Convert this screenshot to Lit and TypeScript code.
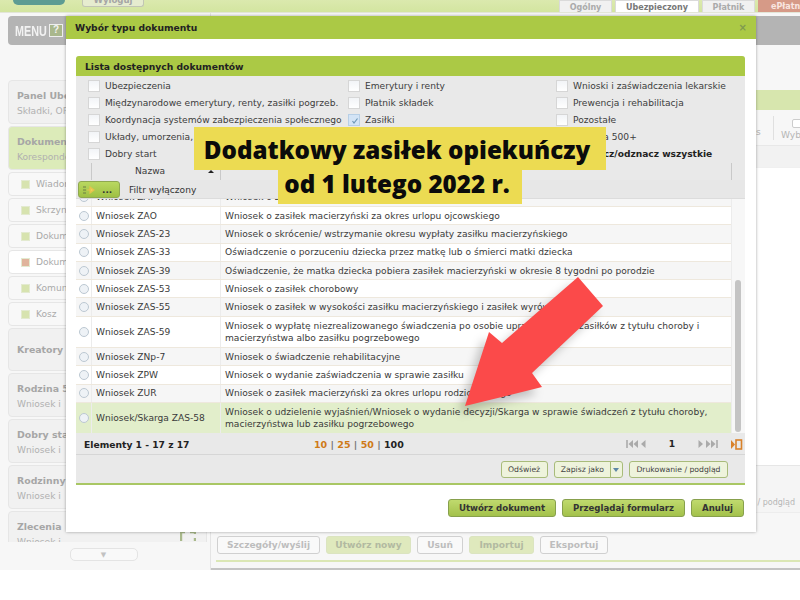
import { LitElement, html, css, svg } from "lit";
import { customElement } from "lit/decorators.js";

const SIDE = [
  { k: "big", t: "Panel Ubezpieczonego", s: "Składki, OFE" },
  { k: "big green", t: "Dokumenty", s: "Korespondencja" },
  { k: "sub", t: "Wiadomości" },
  { k: "sub", t: "Skrzynka" },
  { k: "sub", t: "Dokumenty robocze" },
  { k: "sub on", t: "Dokumenty wysłane" },
  { k: "sub", t: "Komunikaty" },
  { k: "sub", t: "Kosz" },
  { k: "big solo", t: "Kreatory" },
  { k: "big", t: "Rodzina 500+", s: "Wniosek i" },
  { k: "big", t: "Dobry start", s: "Wniosek i" },
  { k: "big", t: "Rodzinny kapitał", s: "Wniosek i" },
];

const COL1 = ["Ubezpieczenia", "Międzynarodowe emerytury, renty, zasiłki pogrzeb.", "Koordynacja systemów zabezpieczenia społecznego", "Układy, umorzenia, ulgi", "Dobry start"];
const COL2 = ["Emerytury i renty", "Płatnik składek", "Zasiłki"];
const COL3 = ["Wnioski i zaświadczenia lekarskie", "Prewencja i rehabilitacja", "Pozostałe", "Rodzina 500+"];

const ROWS: [string, string[], string][] = [
  ["Wniosek ZAY", ["Wniosek o zasiłek"], "a clip"],
  ["Wniosek ZAO", ["Wniosek o zasiłek macierzyński za okres urlopu ojcowskiego"], ""],
  ["Wniosek ZAS-23", ["Wniosek o skrócenie/ wstrzymanie okresu wypłaty zasiłku macierzyńskiego"], "a"],
  ["Wniosek ZAS-33", ["Oświadczenie o porzuceniu dziecka przez matkę lub o śmierci matki dziecka"], ""],
  ["Wniosek ZAS-39", ["Oświadczenie, że matka dziecka pobiera zasiłek macierzyński w okresie 8 tygodni po porodzie"], "a"],
  ["Wniosek ZAS-53", ["Wniosek o zasiłek chorobowy"], ""],
  ["Wniosek ZAS-55", ["Wniosek o zasiłek w wysokości zasiłku macierzyńskiego i zasiłek wyrównawczy"], "a"],
  ["Wniosek ZAS-59", ["Wniosek o wypłatę niezrealizowanego świadczenia po osobie uprawnionej do zasiłków z tytułu choroby i", "macierzyństwa albo zasiłku pogrzebowego"], "two"],
  ["Wniosek ZNp-7", ["Wniosek o świadczenie rehabilitacyjne"], "a"],
  ["Wniosek ZPW", ["Wniosek o wydanie zaświadczenia w sprawie zasiłku"], ""],
  ["Wniosek ZUR", ["Wniosek o zasiłek macierzyński za okres urlopu rodzicielskiego"], "a"],
  ["Wniosek/Skarga ZAS-58", ["Wniosek o udzielenie wyjaśnień/Wniosek o wydanie decyzji/Skarga w sprawie świadczeń z tytułu choroby,", "macierzyństwa lub zasiłku pogrzebowego"], "two sel"],
];

@customElement("app-root")
export class AppRoot extends LitElement {
  static styles = css`
    :host { display: block; width: 800px; height: 600px; position: relative; overflow: hidden; background: #fff; font-family: "DejaVu Sans", Verdana, sans-serif; font-size: 9.1px; color: #333; }
    * { box-sizing: border-box; }
    .app { height: 570px; background: #f7f7f7; display: flex; flex-direction: column; }
    .top { height: 13px; flex: none; display: flex; background: linear-gradient(#dbe9ae, #d3e5a0); border-bottom: 1px solid #e3e6d8; overflow: hidden; }
    .logo { width: 52px; height: 5px; margin-left: 13px; background: #5d9c93; border-radius: 0 0 8px 8px; }
    .logout { margin-left: 17px; width: 62px; height: 7px; border: 1px solid #c2c6b4; border-top: 0; border-radius: 0 0 3px 3px; background: #e6eccf; color: #a5a5a5; font-weight: 700; font-size: 8.6px; line-height: 1px; text-align: center; }
    .tabs { margin-left: auto; display: flex; gap: 3px; }
    .tab { width: 53px; height: 14px; background: #f1f1f1; border: 1px solid #dadada; border-bottom: 0; color: #aaa; font-weight: 700; font-size: 8px; line-height: 13px; text-align: center; }
    .tab.cur { width: 84px; background: #fff; color: #777; }
    .tab.pay { width: 42px; background: #d69a87; border: 0; color: #f9e6e0; white-space: nowrap; overflow: hidden; text-align: left; padding-left: 13px; }
    .body { flex: 1; display: flex; min-height: 0; }
    .side { width: 211px; flex: none; padding: 3px 3px 0 8px; display: flex; flex-direction: column; border-right: 1px solid #e4e4e4; }
    .menu { height: 29px; flex: none; background: #b4b4b4; border-radius: 4px; color: #f2f2f2; font-family: "Liberation Sans", sans-serif; font-weight: 700; font-size: 15px; display: flex; align-items: center; padding-left: 7px; gap: 7px; }
    .menu span { display: block; width: 27px; transform: scaleX(.72); transform-origin: left; }
    .menu i { width: 14px; height: 13px; border: 1.5px solid #eee; background: #a9b78c; font-style: normal; font-size: 10px; line-height: 10px; text-align: center; }
    .list { height: 462px; margin-top: 35px; overflow: hidden; display: flex; flex-direction: column; gap: 2px; flex: none; }
    .card { flex: none; border: 1px solid #e6e6e6; border-radius: 4px; background: #f1f1f1; color: #aaa; padding: 0 8px; white-space: nowrap; overflow: hidden; }
    .big { height: 44px; padding-top: 8px; }
    .big b { display: block; font-size: 9.4px; line-height: 14px; color: #a6a6a6; }
    .big span { display: block; font-size: 9.1px; line-height: 17px; color: #b0b0b0; }
    .green { background: #dcebb9; }
    .solo { height: 43px; padding-top: 14px; }
    .sub { height: 24px; background: #f8f8f8; display: flex; align-items: center; gap: 6px; padding-left: 12px; }
    .sub::before { content: ""; width: 7px; height: 7px; background: #d7e3af; border: 1px solid #e3ead0; }
    .on { background: #fff; }
    .on::before { background: #e0b49c; }
    .zl { position: relative; height: 40px; }
    .zl svg { position: absolute; right: 10px; top: 19px; }
    .more { align-self: center; width: 68px; height: 13px; margin: 6px 8px 0 0; border: 1px solid #e4e4e4; border-radius: 5px; background: #f9f9f9; display: flex; align-items: center; justify-content: center; color: #c2c2c2; font-size: 7px; flex: none; }
    .main { flex: 1; display: flex; flex-direction: column; min-width: 0; padding-top: 3px; }
    .grayhead { height: 29px; flex: none; background: #b4b4b4; }
    .ghead { height: 20px; flex: none; margin-top: 45px; background: #d7e6ae; }
    .tools { height: 36px; flex: none; padding-left: 545px; display: flex; align-items: center; border-bottom: 1px solid #e8e8e8; color: #b5b5b5; white-space: nowrap; overflow: hidden; }
    .tools .s { width: 17px; flex: none; padding-top: 8px; }
    .tools .sep { width: 1px; height: 24px; flex: none; background: #e0e0e0; margin-right: 7px; }
    .wyb { display: flex; flex-direction: column; gap: 2px; align-items: flex-start; padding-top: 3px; flex: none; }
    .wyb i { width: 13px; height: 9px; flex: none; border: 1px solid #ccc; border-radius: 2px; background: #fff; margin-left: 11px; }
    .lighter { height: 22px; flex: none; background: #f2f2f2; border-bottom: 1px solid #f0f0f0; }
    .fill { flex: none; height: 297px; background: #fff; border-left: 1px solid #e8e8e8; }
    .printrow { height: 48px; flex: none; border-top: 1px solid #e6e6e6; border-bottom: 1px solid #ededed; padding: 31px 5px 0 0; text-align: right; color: #b5b5b5; white-space: nowrap; background: #f5f5f5; font-size: 8px; line-height: 12px; }
    .acts { height: 24px; flex: none; display: flex; gap: 6px; margin: 23px 0 0 6px; align-items: flex-start; }
    .ab { height: 18px; border: 1px solid #d0d0d0; border-radius: 3px; background: #f9f9f9; color: #bdbdbd; font-weight: 700; font-size: 9.1px; line-height: 16px; text-align: center; flex: none; }
    .ab.g { background: #dfe9bd; border-color: #dbe4c0; color: #b2b9a1; }
    .greenline { height: 2px; flex: none; margin-left: 5px; background: #dbe7b5; }
    .grayline { position: absolute; left: 211px; right: 0; top: 568px; height: 2px; background: #c4c4c4; }

    .modal { position: absolute; left: 66px; top: 16px; width: 690px; height: 516px; background: #fff; box-shadow: 0 0 3px rgba(0,0,0,.35); display: flex; flex-direction: column; }
    .mhead { height: 23px; flex: none; background: #abc945; color: #222; font-weight: 700; font-size: 9.2px; padding: 0 9px; display: flex; align-items: center; justify-content: space-between; }
    .mhead span { color: #7f9a50; font-size: 10px; font-weight: 700; }
    .panel { margin: 17px 11px 0 10px; height: 429px; flex: none; background: #e9e9e9; display: flex; flex-direction: column; border-bottom: 2px solid #a9c764; border-radius: 3px 3px 0 0; }
    .phead { height: 20px; flex: none; background: #abc945; border-radius: 3px 3px 0 0; color: #222; font-weight: 700; font-size: 9.2px; line-height: 21px; padding-left: 9px; }
    .opts { height: 87px; flex: none; display: flex; padding: 1px 0 0 12px; }
    .col { display: flex; flex-direction: column; }
    .col.c1 { width: 260px; } .col.c2 { width: 208px; }
    .opt { height: 17px; display: flex; align-items: center; gap: 5px; white-space: nowrap; color: #3c3c3c; }
    .opt i { width: 12px; height: 12px; flex: none; border: 1px solid #d6d6d6; background: linear-gradient(#f2f4f7, #fff); position: relative; }
    .opt i.chk { background: #d3e4f6; border-color: #b7cfe6; }
    .opt i.chk svg { position: absolute; left: 1px; top: 1px; }
    .opt.all { font-weight: 700; color: #222; }
    .thead { height: 17px; flex: none; display: grid; grid-template-columns: 15px 129px 1fr 14px; }
    .thead div { border-left: 1px solid #c9c9c9; line-height: 17px; padding-left: 43px; color: #3c3c3c; }
    .thead div:first-child { border: 0; }
    .thead div:nth-child(2) { position: relative; }
    .thead div:nth-child(2)::after { content: ""; position: absolute; right: 6px; top: 7px; border: 3px solid transparent; border-top: 0; border-bottom: 3px solid #222; }
    .thead div:last-child { padding: 0; }
    .filter { height: 19px; flex: none; background: #e7e7e7; display: flex; align-items: center; padding: 1px 0 0 2px; border-bottom: 1px solid #dcdcdc; }
    .fbtn { width: 42px; height: 17px; border: 1px solid #8fa850; border-radius: 3px; background: linear-gradient(#b9d860, #9fc043); display: flex; align-items: center; gap: 6px; padding-left: 4px; margin-right: 9px; font-weight: 700; font-size: 9px; color: #333; }
    .tablewrap { height: 234px; flex: none; display: flex; background: #fff; }
    .rows { width: 655px; flex: none; overflow: hidden; }
    .row { height: 18.3px; display: grid; grid-template-columns: 15px 129px 1fr; background: #fff; border-bottom: 1px solid #eee8dd; color: #3a3a3a; }
    .row.a { background: #f6f6f6; }
    .row.clip { margin-top: -10.3px; }
    .row.two { height: 31.3px; }
    .row.sel { height: 30.7px; background: #e2eecb; border-bottom-color: #b3cc7a; }
    .row > div { display: flex; flex-direction: column; justify-content: center; border-left: 1px solid #ececec; padding: 1px 0 0 4px; line-height: 12.8px; white-space: nowrap; }
    .row > .r { border: 0; padding: 0; align-items: center; }
    .r i { width: 10px; height: 10px; border: 1px solid #bcc8d2; border-radius: 50%; background: #eef2f6; }
    .scroll { flex: 1; background: #f7f7f7; border-left: 1px solid #ececec; display: flex; flex-direction: column; justify-content: flex-end; padding: 0 4px 1px 3px; }
    .scroll i { display: block; height: 152px; background: #c4c4c4; border-radius: 3px; }
    .foot { height: 22px; flex: none; display: flex; align-items: center; border-bottom: 1px solid #d6d6d6; padding: 1px 0 0 8px; font-weight: 700; color: #222; }
    .foot .count { width: 230px; font-size: 9.2px; }
    .sizes { width: 312px; font-size: 9.5px; white-space: nowrap; color: #777; }
    .sizes b { color: #cf7a17; }
    .sizes em { font-style: normal; color: #222; }
    .pg { display: flex; align-items: center; }
    .pg span { width: 52px; text-align: center; color: #222; }
    .pg svg.end { margin-left: 13px; }
    .bar { flex: 1; display: flex; align-items: center; justify-content: flex-end; gap: 6px; padding: 1px 17px 0 0; }
    .sb { height: 17px; border: 1px solid #a8bb7a; border-radius: 3px; background: #eef3dc; font-size: 7.7px; line-height: 15px; padding: 0 6.5px; color: #444; white-space: nowrap; }
    .split { display: flex; padding: 0; }
    .split span { padding: 0 6px; border-right: 1px solid #a8bb7a; }
    .split u { width: 11px; display: flex; align-items: center; justify-content: center; }
    .split u::after { content: ""; border: 3px solid transparent; border-bottom: 0; border-top: 4px solid #5d87a6; }
    .mbtns { display: flex; justify-content: flex-end; gap: 6px; margin: 14px 12px 0 0; }
    .mb { height: 18px; border: 1px solid #87a04c; border-radius: 3px; background: linear-gradient(#c0da6e, #a3c14b); font-weight: 700; color: #333; line-height: 16px; font-size: 8.6px; padding: 0 10px; white-space: nowrap; }

    .banner { position: absolute; left: 194px; top: 127px; width: 412px; display: flex; flex-direction: column; align-items: center; font-family: "Open Sans", sans-serif; font-weight: 800; font-size: 24.2px; color: #0b0b0b; white-space: nowrap; }
    .banner div { background: #ecdb52; text-align: center; padding-right: 6px; }
    .b1 { width: 412px; height: 43px; line-height: 45px; }
    .b2 { width: 244px; height: 34px; line-height: 27px; }
    .arrow { position: absolute; left: 0; top: 0; pointer-events: none; }
  `;

  render() {
    return html`
      <div class="app">
        <div class="top">
          <div class="logo"></div>
          <div class="logout">Wyloguj</div>
          <div class="tabs">
            <div class="tab">Ogólny</div>
            <div class="tab cur">Ubezpieczony</div>
            <div class="tab">Płatnik</div>
            <div class="tab pay">ePłatnik</div>
          </div>
        </div>
        <div class="body">
          <div class="side">
            <div class="menu"><span>MENU</span> <i>?</i></div>
            <div class="list">
              ${SIDE.map((c) => c.k.startsWith("sub")
                ? html`<div class="card ${c.k}">${c.t}</div>`
                : html`<div class="card ${c.k}"><b>${c.t}</b>${c.s ? html`<span>${c.s}</span>` : ""}</div>`)}
              <div class="card big zl"><b>Zlecenia</b><span>Wniosek i</span>
                <svg width="16" height="10" viewBox="0 0 16 10"><path d="M1 10V1h4M15 3V1h-5M15 10V7" fill="none" stroke="#a9b98b" stroke-width="2.4"/></svg>
              </div>
            </div>
            <div class="more">▼</div>
          </div>
          <div class="main">
            <div class="grayhead"></div>
            <div class="ghead"></div>
            <div class="tools"><span class="s">s</span><span class="sep"></span><div class="wyb"><i></i><span>Wybierz</span></div></div>
            <div class="lighter"></div>
            <div class="fill"></div>
            <div class="printrow">/ podgląd</div>
            <div class="acts">
              <div class="ab" style="width:103px">Szczegóły/wyślij</div>
              <div class="ab g" style="width:85px">Utwórz nowy</div>
              <div class="ab" style="width:46px">Usuń</div>
              <div class="ab g" style="width:65px">Importuj</div>
              <div class="ab" style="width:68px">Eksportuj</div>
            </div>
            <div class="greenline"></div>
          </div>
        </div>
      </div>
      <div class="grayline"></div>

      <div class="modal">
        <div class="mhead">Wybór typu dokumentu <span>×</span></div>
        <div class="panel">
          <div class="phead">Lista dostępnych dokumentów</div>
          <div class="opts">
            <div class="col c1">${COL1.map((t) => html`<div class="opt"><i></i>${t}</div>`)}</div>
            <div class="col c2">${COL2.map((t) => html`<div class="opt"><i class=${t === "Zasiłki" ? "chk" : ""}>${t === "Zasiłki" ? svg`<svg width="10" height="10" viewBox="0 0 10 10"><path d="M2.500 5l1.500 2 3.500-4.500" fill="none" stroke="#6d97b6" stroke-width="1.200"/></svg>` : ""}</i>${t}</div>`)}</div>
            <div class="col">${COL3.map((t) => html`<div class="opt"><i></i>${t}</div>`)}<div class="opt all"><i></i>Zaznacz/odznacz wszystkie</div></div>
          </div>
          <div class="thead"><div></div><div>Nazwa</div><div></div><div></div></div>
          <div class="filter">
            <div class="fbtn">
              <svg width="13" height="10" viewBox="0 0 13 10"><path d="M0 2h3M0 5h3M0 8h3" stroke="#6b7f45" stroke-width="1.200"/><path d="M4 5h4M7 2l4 3-4 3z" stroke="#e6c24c" stroke-width="1.200" fill="#f0d25a"/></svg>
              ...
            </div>
            Filtr wyłączony
          </div>
          <div class="tablewrap">
            <div class="rows">
              ${ROWS.map(([n, d, k]) => html`<div class="row ${k}"><div class="r"><i></i></div><div>${n}</div><div>${d.map((l) => html`<span>${l}</span>`)}</div></div>`)}
            </div>
            <div class="scroll"><i></i></div>
          </div>
          <div class="foot">
            <span class="count">Elementy 1 - 17 z 17</span>
            <span class="sizes"><b>10</b> | <b>25</b> | <b>50</b> | <em>100</em></span>
            <div class="pg">
              <svg width="20" height="10" viewBox="0 0 20 10"><path d="M1 1v8" stroke="#aaa" stroke-width="1.600"/><path d="M7 1v8L2.500 5zM12 1v8L7.500 5zM19.500 1v8L15 5z" fill="#aaa"/></svg>
              <span>1</span>
              <svg width="20" height="10" viewBox="0 0 20 10"><path d="M.5 1v8L5 5zM8 1v8l4.500-4zM13 1v8l4.500-4z" fill="#aaa"/><path d="M19 1v8" stroke="#aaa" stroke-width="1.600"/></svg>
              <svg class="end" width="12" height="11" viewBox="0 0 12 11"><path d="M0 1v9l4-4.500z" fill="#d9822b"/><rect x="5" y="1" width="5.500" height="9" fill="none" stroke="#d9822b" stroke-width="1.600"/></svg>
            </div>
          </div>
          <div class="bar">
            <div class="sb">Odśwież</div>
            <div class="sb split"><span>Zapisz jako</span><u></u></div>
            <div class="sb">Drukowanie / podgląd</div>
          </div>
        </div>
        <div class="mbtns">
          <div class="mb">Utwórz dokument</div>
          <div class="mb">Przeglądaj formularz</div>
          <div class="mb">Anuluj</div>
        </div>
      </div>

      <div class="banner">
        <div class="b1">Dodatkowy zasiłek opiekuńczy</div>
        <div class="b2">od 1 lutego 2022 r.</div>
      </div>
      <svg class="arrow" width="800" height="600" viewBox="0 0 800 600">
        <polygon points="578,277 603,306 532,373 542,387 465,406 489,332 502,343" fill="rgba(0,0,0,.22)" transform="translate(-6,7)" style="filter:blur(5px)"/>
        <polygon points="578,277 603,306 532,373 542,387 465,406 489,332 502,343" fill="#fb4a4a"/>
      </svg>
    `;
  }
}
